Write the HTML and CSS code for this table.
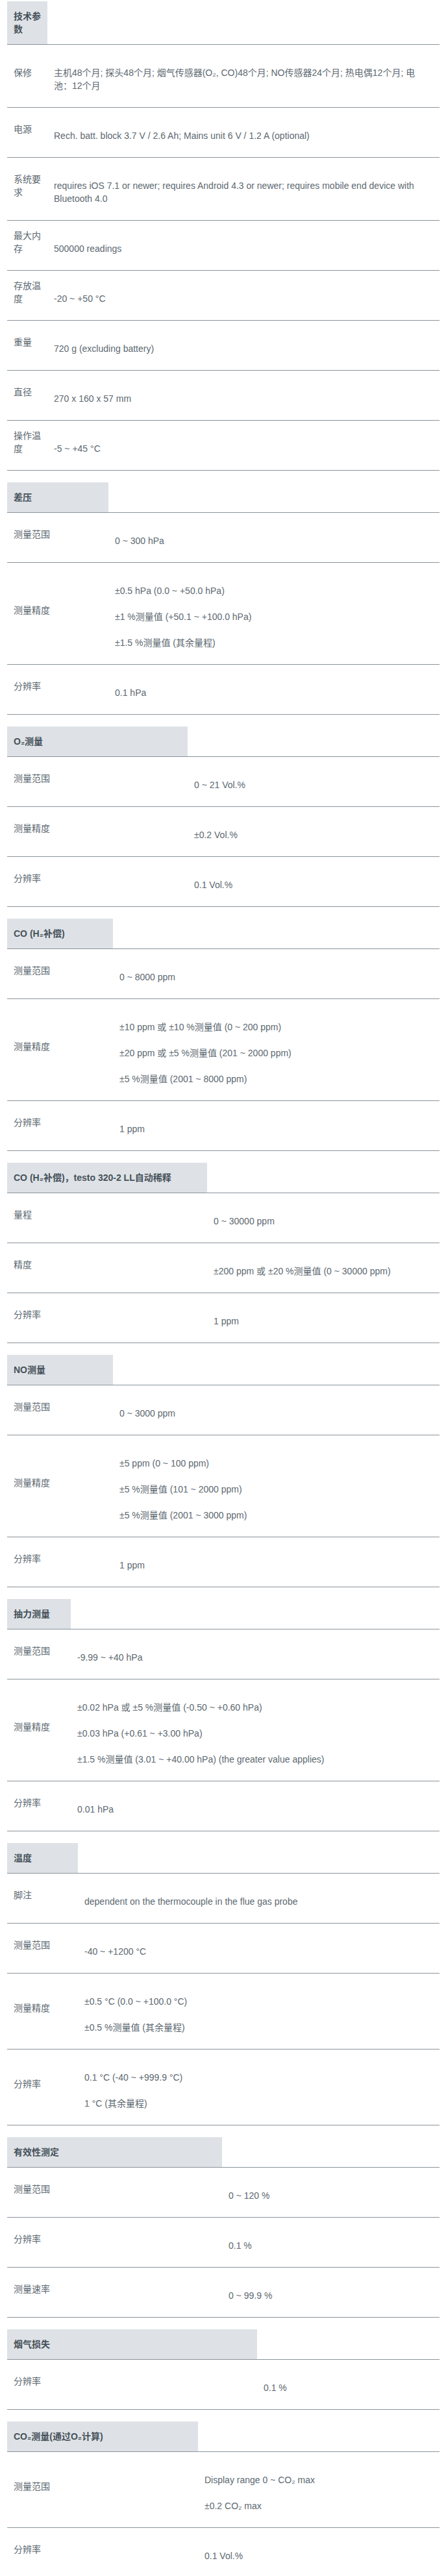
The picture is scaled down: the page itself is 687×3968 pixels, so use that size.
FILE: index.html
```html
<!DOCTYPE html>
<html lang="zh-CN">
<head>
  <meta charset="UTF-8">
  <meta name="viewport" content="width=device-width, initial-scale=1.0">
  <title>技术参数</title>
  <link rel="stylesheet" href="styles.css">
</head>
<body>
  <div class="specs">

    <table class="spec spec--general">
      <tr class="spec-head"><th>技术参数</th><td></td></tr>
      <tr>
        <td class="lbl"><p>保修</p></td>
        <td class="val"><p>主机48个月; 探头48个月; 烟气传感器(O₂, CO)48个月; NO传感器24个月; 热电偶12个月; 电池：12个月</p></td>
      </tr>
      <tr>
        <td class="lbl"><p>电源</p></td>
        <td class="val"><p>Rech. batt. block 3.7 V / 2.6 Ah; Mains unit 6 V / 1.2 A (optional)</p></td>
      </tr>
      <tr>
        <td class="lbl"><p>系统要求</p></td>
        <td class="val"><p>requires iOS 7.1 or newer; requires Android 4.3 or newer; requires mobile end device with Bluetooth 4.0</p></td>
      </tr>
      <tr>
        <td class="lbl"><p>最大内存</p></td>
        <td class="val"><p>500000 readings</p></td>
      </tr>
      <tr>
        <td class="lbl"><p>存放温度</p></td>
        <td class="val"><p>-20 ~ +50 °C</p></td>
      </tr>
      <tr>
        <td class="lbl"><p>重量</p></td>
        <td class="val"><p>720 g (excluding battery)</p></td>
      </tr>
      <tr>
        <td class="lbl"><p>直径</p></td>
        <td class="val"><p>270 x 160 x 57 mm</p></td>
      </tr>
      <tr>
        <td class="lbl"><p>操作温度</p></td>
        <td class="val"><p>-5 ~ +45 °C</p></td>
      </tr>
    </table>

    <table class="spec spec--diff">
      <tr class="spec-head"><th>差压</th><td></td></tr>
      <tr>
        <td class="lbl"><p>测量范围</p></td>
        <td class="val"><p>0 ~ 300 hPa</p></td>
      </tr>
      <tr>
        <td class="lbl"><p>测量精度</p></td>
        <td class="val">
          <p>±0.5 hPa (0.0 ~ +50.0 hPa)</p>
          <p>±1 %测量值 (+50.1 ~ +100.0 hPa)</p>
          <p>±1.5 %测量值 (其余量程)</p>
        </td>
      </tr>
      <tr>
        <td class="lbl"><p>分辨率</p></td>
        <td class="val"><p>0.1 hPa</p></td>
      </tr>
    </table>

    <table class="spec spec--o2">
      <tr class="spec-head"><th>O₂测量</th><td></td></tr>
      <tr>
        <td class="lbl"><p>测量范围</p></td>
        <td class="val"><p>0 ~ 21 Vol.%</p></td>
      </tr>
      <tr>
        <td class="lbl"><p>测量精度</p></td>
        <td class="val"><p>±0.2 Vol.%</p></td>
      </tr>
      <tr>
        <td class="lbl"><p>分辨率</p></td>
        <td class="val"><p>0.1 Vol.%</p></td>
      </tr>
    </table>

    <table class="spec spec--co">
      <tr class="spec-head"><th>CO (H₂补偿)</th><td></td></tr>
      <tr>
        <td class="lbl"><p>测量范围</p></td>
        <td class="val"><p>0 ~ 8000 ppm</p></td>
      </tr>
      <tr>
        <td class="lbl"><p>测量精度</p></td>
        <td class="val">
          <p>±10 ppm 或 ±10 %测量值 (0 ~ 200 ppm)</p>
          <p>±20 ppm 或 ±5 %测量值 (201 ~ 2000 ppm)</p>
          <p>±5 %测量值 (2001 ~ 8000 ppm)</p>
        </td>
      </tr>
      <tr>
        <td class="lbl"><p>分辨率</p></td>
        <td class="val"><p>1 ppm</p></td>
      </tr>
    </table>

    <table class="spec spec--co-ll">
      <tr class="spec-head"><th>CO (H₂补偿)，testo 320-2 LL自动稀释</th><td></td></tr>
      <tr>
        <td class="lbl"><p>量程</p></td>
        <td class="val"><p>0 ~ 30000 ppm</p></td>
      </tr>
      <tr>
        <td class="lbl"><p>精度</p></td>
        <td class="val"><p>±200 ppm 或 ±20 %测量值 (0 ~ 30000 ppm)</p></td>
      </tr>
      <tr>
        <td class="lbl"><p>分辨率</p></td>
        <td class="val"><p>1 ppm</p></td>
      </tr>
    </table>

    <table class="spec spec--no">
      <tr class="spec-head"><th>NO测量</th><td></td></tr>
      <tr>
        <td class="lbl"><p>测量范围</p></td>
        <td class="val"><p>0 ~ 3000 ppm</p></td>
      </tr>
      <tr>
        <td class="lbl"><p>测量精度</p></td>
        <td class="val">
          <p>±5 ppm (0 ~ 100 ppm)</p>
          <p>±5 %测量值 (101 ~ 2000 ppm)</p>
          <p>±5 %测量值 (2001 ~ 3000 ppm)</p>
        </td>
      </tr>
      <tr>
        <td class="lbl"><p>分辨率</p></td>
        <td class="val"><p>1 ppm</p></td>
      </tr>
    </table>

    <table class="spec spec--draught">
      <tr class="spec-head"><th>抽力测量</th><td></td></tr>
      <tr>
        <td class="lbl"><p>测量范围</p></td>
        <td class="val"><p>-9.99 ~ +40 hPa</p></td>
      </tr>
      <tr>
        <td class="lbl"><p>测量精度</p></td>
        <td class="val">
          <p>±0.02 hPa 或 ±5 %测量值 (-0.50 ~ +0.60 hPa)</p>
          <p>±0.03 hPa (+0.61 ~ +3.00 hPa)</p>
          <p>±1.5 %测量值 (3.01 ~ +40.00 hPa) (the greater value applies)</p>
        </td>
      </tr>
      <tr>
        <td class="lbl"><p>分辨率</p></td>
        <td class="val"><p>0.01 hPa</p></td>
      </tr>
    </table>

    <table class="spec spec--temp">
      <tr class="spec-head"><th>温度</th><td></td></tr>
      <tr>
        <td class="lbl"><p>脚注</p></td>
        <td class="val"><p>dependent on the thermocouple in the flue gas probe</p></td>
      </tr>
      <tr>
        <td class="lbl"><p>测量范围</p></td>
        <td class="val"><p>-40 ~ +1200 °C</p></td>
      </tr>
      <tr>
        <td class="lbl"><p>测量精度</p></td>
        <td class="val">
          <p>±0.5 °C (0.0 ~ +100.0 °C)</p>
          <p>±0.5 %测量值 (其余量程)</p>
        </td>
      </tr>
      <tr>
        <td class="lbl"><p>分辨率</p></td>
        <td class="val">
          <p>0.1 °C (-40 ~ +999.9 °C)</p>
          <p>1 °C (其余量程)</p>
        </td>
      </tr>
    </table>

    <table class="spec spec--eff">
      <tr class="spec-head"><th>有效性测定</th><td></td></tr>
      <tr>
        <td class="lbl"><p>测量范围</p></td>
        <td class="val"><p>0 ~ 120 %</p></td>
      </tr>
      <tr>
        <td class="lbl"><p>分辨率</p></td>
        <td class="val"><p>0.1 %</p></td>
      </tr>
      <tr>
        <td class="lbl"><p>测量速率</p></td>
        <td class="val"><p>0 ~ 99.9 %</p></td>
      </tr>
    </table>

    <table class="spec spec--loss">
      <tr class="spec-head"><th>烟气损失</th><td></td></tr>
      <tr>
        <td class="lbl"><p>分辨率</p></td>
        <td class="val"><p>0.1 %</p></td>
      </tr>
    </table>

    <table class="spec spec--co2">
      <tr class="spec-head"><th>CO₂测量(通过O₂计算)</th><td></td></tr>
      <tr>
        <td class="lbl"><p>测量范围</p></td>
        <td class="val">
          <p>Display range 0 ~ CO₂ max</p>
          <p>±0.2 CO₂ max</p>
        </td>
      </tr>
      <tr>
        <td class="lbl"><p>分辨率</p></td>
        <td class="val"><p>0.1 Vol.%</p></td>
      </tr>
    </table>

  </div>
</body>
</html>
```

FILE: styles.css
```css
body {
  margin: 0;
  background-color: #fff;
  font-family: "Liberation Sans", "Noto Sans CJK SC", sans-serif;
  font-size: 14px;
  line-height: 20px;
  color: #5d6971;
}

.specs {
  padding: 2px 10px 0 11px;
}

.spec {
  width: 100%;
  table-layout: fixed;
  border-collapse: collapse;
  margin-bottom: 18px;
}

.spec th,
.spec td {
  padding: 13px 10px;
  border-bottom: 1px solid #8a949b;
  vertical-align: middle;
  text-align: left;
}

.spec p {
  margin: 0;
}

.spec th {
  width: var(--label-w);
  background-color: #dee2e6;
  color: #46515a;
  font-weight: bold;
}

.spec-head td {
  padding: 0;
}

/* label cell sits a little above centre, value cell a little below */
.lbl p {
  margin: 0 0 10px;
}

.val p {
  margin: 20px 0 10px;
}

/* first column width per section */
.spec--general { --label-w: 42px; }
.spec--diff    { --label-w: 136px; }
.spec--o2      { --label-w: 258px; }
.spec--co      { --label-w: 143px; }
.spec--co-ll   { --label-w: 288px; }
.spec--no      { --label-w: 143px; }
.spec--draught { --label-w: 78px; }
.spec--temp    { --label-w: 89px; }
.spec--eff     { --label-w: 311px; }
.spec--loss    { --label-w: 365px; }
.spec--co2     { --label-w: 274px; }
```
